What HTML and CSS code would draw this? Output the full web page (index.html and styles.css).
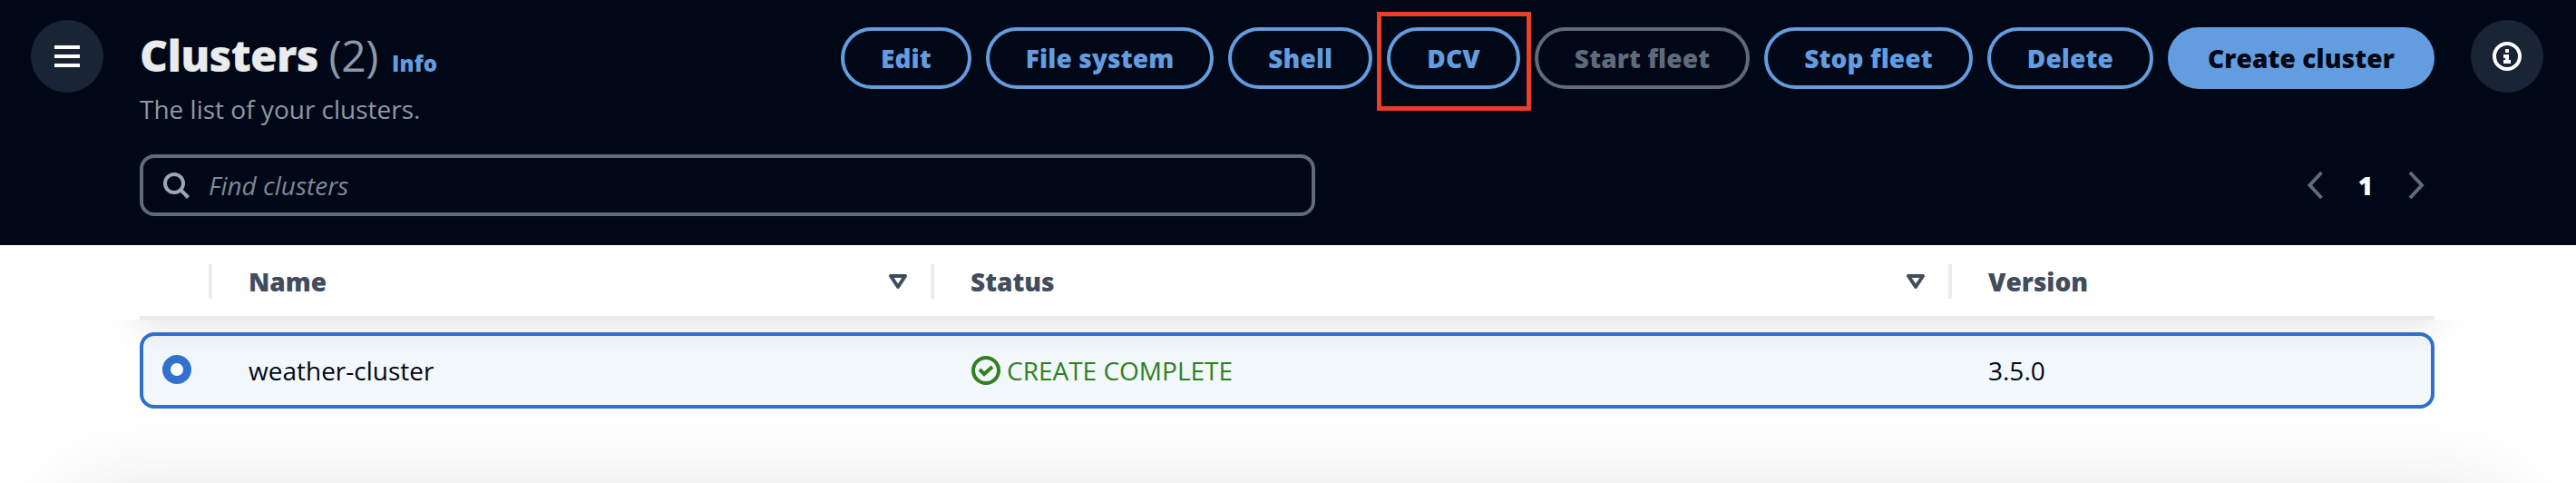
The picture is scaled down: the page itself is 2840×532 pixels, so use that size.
FILE: index.html
```html
<!DOCTYPE html>
<html lang="en">
<head>
<meta charset="utf-8">
<title>Clusters</title>
<link rel="stylesheet" href="styles.css">
</head>
<body>
<div class="page">
  <header class="top">
    <button class="round" aria-label="Open navigation">
      <svg width="32" height="32" viewBox="0 0 32 32"><path d="M2 6h28M2 16h28M2 26h28" stroke="#fff" stroke-width="4"/></svg>
    </button>
    <div class="main">
      <div class="heading">
        <div class="titles">
          <h1 class="title">Clusters <span class="count">(2)</span><a class="info">Info</a></h1>
          <p class="desc">The list of your clusters.</p>
        </div>
        <div class="actions">
          <button class="btn">Edit</button>
          <button class="btn">File system</button>
          <button class="btn">Shell</button>
          <button class="btn marked">DCV</button>
          <button class="btn disabled">Start fleet</button>
          <button class="btn">Stop fleet</button>
          <button class="btn">Delete</button>
          <button class="btn primary">Create cluster</button>
        </div>
      </div>
      <div class="tools">
        <div class="search">
          <svg width="32" height="32" viewBox="0 0 32 32" fill="none" stroke="#9ba7b6" stroke-width="4"><circle cx="14" cy="14" r="10"/><path d="M21 21l8.500 8.500"/></svg>
          <span class="placeholder">Find clusters</span>
        </div>
        <div class="pager">
          <svg width="20" height="32" viewBox="0 0 20 32" fill="none" stroke="#5f6b7a" stroke-width="4"><path d="M17.500 2L4.500 16l13 14"/></svg>
          <span class="pagenum">1</span>
          <svg width="20" height="32" viewBox="0 0 20 32" fill="none" stroke="#5f6b7a" stroke-width="4"><path d="M3 2l13 14L3 30"/></svg>
        </div>
      </div>
    </div>
    <button class="round" aria-label="Open help">
      <svg width="32" height="32" viewBox="0 0 32 32" fill="none"><circle cx="16" cy="16" r="14" stroke="#fff" stroke-width="4"/><path d="M14 8h4v4h-4zM12 14h6v6h2v4h-8v-4h2v-2h-2z" fill="#fff"/></svg>
    </button>
  </header>
  <main class="content">
    <div class="table">
      <div class="row head">
        <div class="cell"></div>
        <div class="cell">Name<svg width="20" height="16" viewBox="0 0 20 16"><path d="M2 2h16l-8 12z" fill="none" stroke="#414d5c" stroke-width="4" stroke-linejoin="round"/></svg></div>
        <div class="cell">Status<svg width="20" height="16" viewBox="0 0 20 16"><path d="M2 2h16l-8 12z" fill="none" stroke="#414d5c" stroke-width="4" stroke-linejoin="round"/></svg></div>
        <div class="cell">Version</div>
      </div>
      <div class="row selected">
        <div class="cell"><span class="radio"></span></div>
        <div class="cell">weather-cluster</div>
        <div class="cell status"><svg width="32" height="32" viewBox="0 0 32 32" fill="none" stroke="#2f8020" stroke-width="4"><circle cx="16" cy="16" r="14"/><path d="M9 15l5 5 9-8"/></svg>CREATE COMPLETE</div>
        <div class="cell">3.5.0</div>
      </div>
    </div>
    <section class="panel"></section>
  </main>
</div>
</body>
</html>
```
FILE: styles.css
```css
*, *::after { box-sizing: border-box; }
body { margin: 0; font-family: "Open Sans", "Noto Sans", sans-serif; font-size: 28px; line-height: 40px; color: #000716; background: #fff; }
button { font: inherit; margin: 0; }
svg { flex: none; display: block; }
.page { width: 2840px; height: 532px; overflow: hidden; }
.top { height: 270px; background: #000716; display: flex; align-items: flex-start; gap: 40px; padding: 22px 36px 0 34px; }
.round { width: 80px; height: 80px; flex: none; border: 0; padding: 0; border-radius: 50%; background: #192534; display: flex; align-items: center; justify-content: center; }
.main { width: 2530px; padding-top: 8px; }
.heading { display: flex; justify-content: space-between; align-items: flex-start; height: 140px; }
.title { margin: 0; padding-top: 1px; font-size: 48px; line-height: 60px; font-weight: 800; letter-spacing: -0.75px; color: #e9ebed; white-space: nowrap; }
.count { font-weight: 400; letter-spacing: -0.4px; color: #8d99a8; }
.info { font-size: 24px; line-height: 24px; letter-spacing: 0.12px; margin-left: 15px; color: #639de0; }
.desc { margin: 9px 0 0; color: #8d99a8; }
.actions { display: flex; gap: 16px; }
.btn { height: 68px; padding: 0 40px; border: 4px solid #639de0; border-radius: 34px; background: none; color: #639de0; font-weight: 800; letter-spacing: 0.13px; white-space: nowrap; position: relative; }
.disabled { border-color: #5f6b7a; color: #5f6b7a; }
.primary { background: #639de0; color: #000716; }
.marked::after { content: ""; position: absolute; left: -15px; top: -21px; width: 170px; height: 109px; border: 5px solid #ea3f24; }
.tools { display: flex; justify-content: space-between; }
.search { width: 1296px; height: 68px; border: 4px solid #5f6b7a; border-radius: 16px; display: flex; align-items: center; gap: 20px; padding-left: 20px; }
.placeholder { font-style: italic; color: #7d8998; }
.pager { display: flex; align-items: center; justify-content: space-between; width: 132px; margin-right: 10px; color: #fff; font-weight: 800; }
.content { height: 262px; }
.table { width: 2530px; margin-left: 154px; }
.row { display: grid; grid-template-columns: 80px 796px 1122px 1fr; align-items: center; }
.head { height: 82px; padding-top: 2px; border-bottom: 4px solid #eaeaea; color: #414d5c; font-weight: 800; position: relative; }
.head::after { content: ""; position: absolute; inset: 0 0 -4px; box-shadow: 0 8px 40px 2px rgba(0, 0, 0, 0.1); clip-path: inset(100% -80px -80px -80px); }
.head .cell { height: 38px; display: flex; align-items: center; justify-content: space-between; padding: 0 30px 0 40px; }
.head .cell:not(:last-child) { border-right: 4px solid #e9ebed; padding-right: 26px; }
.selected { position: relative; margin-top: 14px; height: 84px; border-radius: 16px; border: 4px solid #2f6fcd; background: rgba(0, 110, 200, 0.05); grid-template-columns: 76px 796px 1122px 1fr; }
.selected .cell { padding-left: 40px; display: flex; align-items: center; gap: 8px; }
.selected .cell:first-child { padding-left: 21px; }
.selected .status { color: #2f8020; padding-left: 41px; gap: 7px; }
.radio { width: 32px; height: 32px; border-radius: 50%; border: 9.5px solid #3271cf; background: #fff; position: relative; top: -1px; }
.panel { width: 2684px; height: 200px; margin: 94px auto 0; border-radius: 32px; background: #fff; box-shadow: 0 0 96px rgba(0, 0, 0, 0.12); }
```
